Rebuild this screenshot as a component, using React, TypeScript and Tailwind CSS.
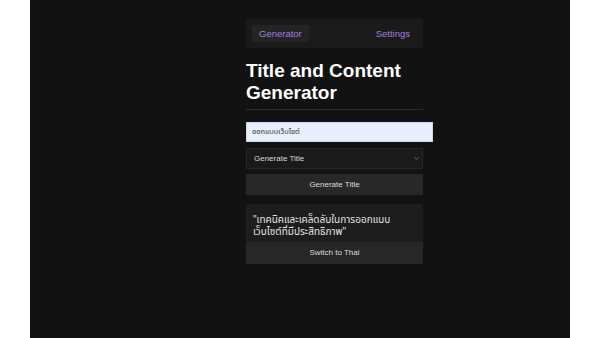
// App.tsx
import { ChevronDown } from "lucide-react";

const font = { fontFamily: '"Liberation Sans", Arial, "Noto Sans Thai", "Noto Sans", sans-serif' };

function Nav() {
  return (
    <nav className="flex items-center justify-between bg-[#1a1a1a] h-[29px] px-[6px]">
      <button className="h-[17px] px-[7px] bg-[#242424] text-[#a27fe0] text-[9.5px] leading-none">
        Generator
      </button>
      <button className="h-[17px] px-[7px] text-[#a27fe0] text-[9.5px] leading-none">
        Settings
      </button>
    </nav>
  );
}

function ResultCard() {
  return (
    <div className="mt-[9px] bg-[#1d1d1d]">
      <p className="px-[7px] pt-[10px] pb-[4px] text-[10px] leading-[12px] text-[#e4e4e4]">
        <span className="block h-[12px]">"เทคนิคและเคล็ดลับในการออกแบบ</span>
        <span className="block h-[12px]">เว็บไซต์ที่มีประสิทธิภาพ"</span>
      </p>
      <button className="block w-full h-[22px] bg-[#272727] text-[#dcdcdc] text-[8px]">
        Switch to Thai
      </button>
    </div>
  );
}

export default function App() {
  return (
    <div className="min-h-screen bg-white" style={font}>
      <div className="mx-auto w-[540px] h-[338px] bg-[#121212] pt-[19px]">
        <div className="ml-[216px] w-[177px]">
          <Nav />

          <h1 className="mt-[12px] text-[19px] leading-[22px] font-bold text-white">
            Title and Content
            <br />
            Generator
          </h1>
          <div className="mt-[5px] h-px bg-[#2c2c2c]" />

          <div className="mt-[12px] w-[187px] h-[20px] bg-[#e8f0fe] border border-[#cfd8e6] flex items-center px-[5px]">
            <span className="text-[7.5px] text-[#333]">ออกแบบเว็บไซต์</span>
          </div>

          <div className="mt-[6px] h-[21px] bg-[#1a1a1a] border border-[#262626] flex items-center justify-between pl-[7px] pr-[2px]">
            <span className="text-[8px] text-[#d8d8d8]">Generate Title</span>
            <ChevronDown size={7} strokeWidth={2} className="text-[#aaa]" />
          </div>

          <button className="block mt-[5px] w-full h-[21px] bg-[#282828] text-[#dcdcdc] text-[8px]">
            Generate Title
          </button>

          <ResultCard />
        </div>
      </div>
    </div>
  );
}
